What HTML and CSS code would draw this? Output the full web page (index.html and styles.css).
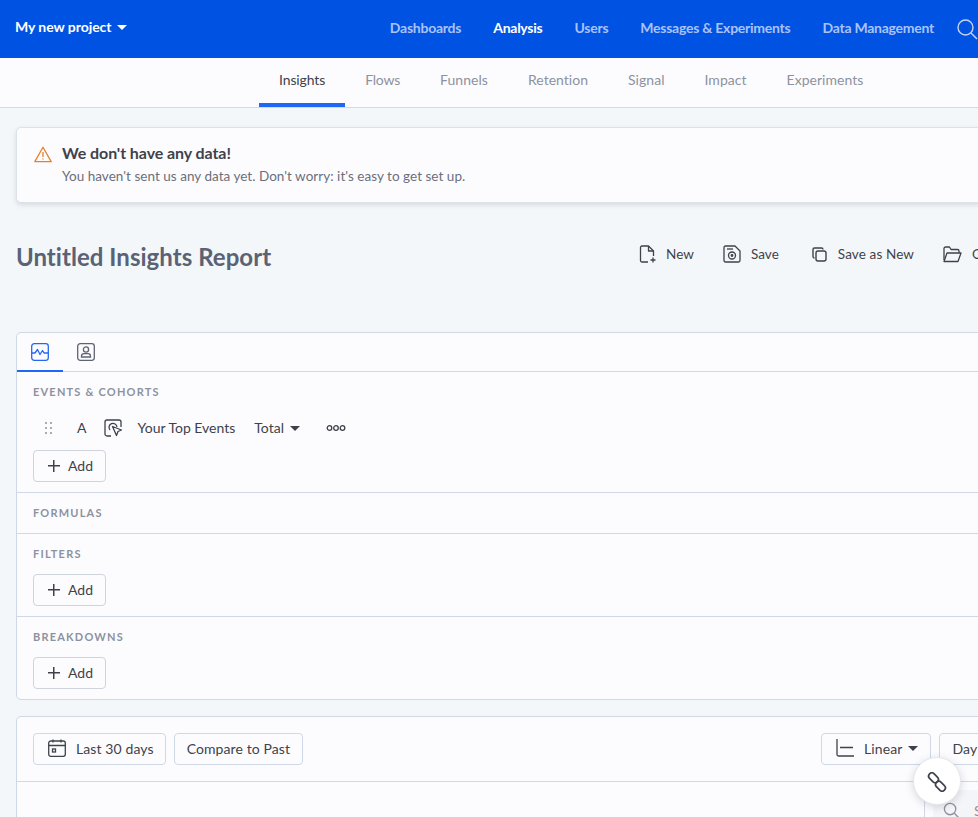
FILE: index.html
```html
<!DOCTYPE html>
<html lang="en">
<head>
    <meta charset="UTF-8">
    <meta name="viewport" content="width=device-width, initial-scale=1.0">
    <title>Untitled Insights Report</title>
    <link rel="stylesheet" href="styles.css">
</head>
<body>
    <div class="page">
        <header class="topbar">
            <div class="project">My new project <span class="caret caret-white"></span></div>
            <nav class="mainNav">
                <a>Dashboards</a>
                <a class="active">Analysis</a>
                <a>Users</a>
                <a>Messages &amp; Experiments</a>
                <a>Data Management</a>
                <svg class="searchIcon" width="22" height="22" viewBox="0 0 22 22" fill="none" stroke="#c3d4f7" stroke-width="1.4"><circle cx="9.5" cy="9.5" r="7.5"/><path d="M15 15l6 6"/></svg>
            </nav>
        </header>

        <nav class="subNav">
            <a class="active">Insights</a>
            <a class="flowsTab">Flows</a>
            <a>Funnels</a>
            <a>Retention</a>
            <a>Signal</a>
            <a>Impact</a>
            <a>Experiments</a>
        </nav>

        <main class="content">
            <div class="alert">
                <svg width="18" height="17" viewBox="0 0 18 17" fill="none" stroke="#e5812b" stroke-width="1.3" stroke-linejoin="round"><path d="M9 1.2L17.2 15.6H.8z"/><path d="M9 6v5M9 12.4v1.2"/></svg>
                <div>
                    <div class="alertTitle">We don't have any data!</div>
                    <div class="alertText">You haven't sent us any data yet. Don't worry: it's easy to get set up.</div>
                </div>
            </div>

            <div class="titleRow">
                <h1>Untitled Insights Report</h1>
                <div class="actions">
                    <span class="action actionNew">
                        <svg width="18" height="18" viewBox="0 0 18 18" fill="none" stroke="#3f424a" stroke-width="1.3" stroke-linejoin="round"><path d="M9 17H3a1.5 1.5 0 0 1-1.5-1.5v-13A1.5 1.5 0 0 1 3 1h6.500l5 5v5"/><path d="M9.500 1v5h5M14 12.500v5M11.500 15h5"/></svg>
                        New
                    </span>
                    <span class="action">
                        <svg width="18" height="18" viewBox="0 0 18 18" fill="none" stroke="#3f424a" stroke-width="1.3" stroke-linejoin="round"><path d="M2.500 1H12l5 5v9.500a1.500 1.500 0 0 1-1.500 1.500h-13A1.500 1.500 0 0 1 1 15.500v-13A1.500 1.500 0 0 1 2.500 1z"/><circle cx="9" cy="10.500" r="3.500"/><circle cx="9" cy="10.500" r=".8"/><path d="M4 4h6"/></svg>
                        Save
                    </span>
                    <span class="action actionCopy">
                        <svg width="15" height="15" viewBox="0 0 15 15" fill="none" stroke="#3f424a" stroke-width="1.4" stroke-linejoin="round"><rect x="4" y="4" width="10" height="10" rx="2"/><path d="M2.500 11A1.500 1.500 0 0 1 1 9.500v-7A1.500 1.500 0 0 1 2.500 1h7A1.500 1.500 0 0 1 11 2.500"/></svg>
                        Save as New
                    </span>
                    <span class="action">
                        <svg width="19" height="17" viewBox="0 0 19 17" fill="none" stroke="#3f424a" stroke-width="1.3" stroke-linejoin="round"><path d="M1 14V2.500A1.500 1.500 0 0 1 2.500 1h4L8 3.500h6.500A1.500 1.500 0 0 1 16 5v2"/><path d="M1 15.500L4 7h14l-3 8.500z"/></svg>
                        Open
                    </span>
                </div>
            </div>

            <section class="panel">
                <div class="panelTabs">
                    <span class="panelTab active">
                        <svg width="18" height="18" viewBox="0 0 18 18" fill="none" stroke="#2468f2" stroke-width="1.3" stroke-linejoin="round"><rect x=".7" y=".7" width="16.600" height="16.600" rx="2.500"/><path d="M1 10h3l2.500-3.500 2.500 5 2.500-4 1.500 2.500h4"/></svg>
                    </span>
                    <span class="panelTab">
                        <svg width="18" height="18" viewBox="0 0 18 18" fill="none" stroke="#5f6473" stroke-width="1.3"><rect x=".7" y=".7" width="16.600" height="16.600" rx="2.500"/><circle cx="9" cy="6.500" r="2.600"/><path d="M4.500 14v-.8a2.500 2.500 0 0 1 2.500-2.500h4a2.500 2.500 0 0 1 2.500 2.500v.8z"/></svg>
                    </span>
                </div>

                <div class="block">
                    <div class="blockLabel">EVENTS &amp; COHORTS</div>
                    <div class="eventRow">
                        <svg class="grip" width="8" height="12" viewBox="0 0 8 12" fill="#a8acb6"><rect width="2" height="2"/><rect x="5" width="2" height="2"/><rect y="5" width="2" height="2"/><rect x="5" y="5" width="2" height="2"/><rect y="10" width="2" height="2"/><rect x="5" y="10" width="2" height="2"/></svg>
                        <span class="eventLetter">A</span>
                        <svg class="eventIcon" width="19" height="18" viewBox="0 0 19 18" fill="none" stroke="#3f424a" stroke-width="1.300" stroke-linejoin="round"><path d="M7 17H3a2 2 0 0 1-2-2V3a2 2 0 0 1 2-2h12a2 2 0 0 1 2 2v5"/><path d="M6 11a4 4 0 1 1 7-3"/><path d="M8.500 7.500l9 3.500-3.500 1.500-1.500 4z"/></svg>
                        <span class="eventName">Your Top Events</span>
                        <span class="eventTotal">Total <span class="caret"></span></span>
                        <svg class="more" width="20" height="8" viewBox="0 0 20 8" fill="none" stroke="#3f424a" stroke-width="1.300"><circle cx="3.500" cy="4" r="2.300"/><circle cx="10" cy="4" r="2.300"/><circle cx="16.500" cy="4" r="2.300"/></svg>
                    </div>
                    <button class="addBtn"><span class="plus"></span>Add</button>
                </div>

                <div class="block blockShort">
                    <div class="blockLabel">FORMULAS</div>
                </div>

                <div class="block">
                    <div class="blockLabel">FILTERS</div>
                    <button class="addBtn"><span class="plus"></span>Add</button>
                </div>

                <div class="block">
                    <div class="blockLabel">BREAKDOWNS</div>
                    <button class="addBtn"><span class="plus"></span>Add</button>
                </div>
            </section>

            <section class="panel chartPanel">
                <div class="chartBar">
                    <div class="chartLeft">
                        <button class="barBtn dateBtn">
                            <svg width="18" height="18" viewBox="0 0 18 18" fill="none" stroke="#3f424a" stroke-width="1.300"><rect x=".7" y="2" width="16.600" height="15.300" rx="2"/><path d="M1 6.500h16M5 .5v3M13 .5v3"/><rect x="4.500" y="10" width="3" height="3"/></svg>
                            Last 30 days
                        </button>
                        <button class="barBtn">Compare to Past</button>
                    </div>
                    <button class="barBtn linearBtn">
                        <svg width="18" height="18" viewBox="0 0 18 18" fill="none" stroke="#3f424a" stroke-width="1.300"><path d="M1 0v15.500A1.500 1.500 0 0 0 2.500 17H18M4 8.500h13"/></svg>
                        Linear <span class="caret"></span>
                    </button>
                    <button class="barBtn">Day <span class="caret"></span></button>
                </div>
                <div class="chartBody">
                    <div class="chartSide">
                        <div class="sideSearch">
                            <svg width="17" height="17" viewBox="0 0 18 18" fill="none" stroke="#8d929e" stroke-width="1.400"><circle cx="7.500" cy="7.500" r="6"/><path d="M12 12l5 5"/></svg>
                            <span>Search</span>
                        </div>
                    </div>
                </div>
            </section>
        </main>

        <button class="linkFab">
            <svg width="20" height="20" viewBox="0 0 20 20" fill="none" stroke="#3f424a" stroke-width="1.700"><rect x="1" y="2.500" width="11" height="6.500" rx="3.250" transform="rotate(45 6.500 5.750)"/><rect x="8" y="11" width="11" height="6.500" rx="3.250" transform="rotate(45 13.500 14.250)"/></svg>
        </button>
    </div>
</body>
</html>
```

FILE: styles.css
```css
body {
    font-family: "Lato", "Open Sans", sans-serif;
    font-size: 14px;
    margin: 0;
    color: #3f424a;
    background-color: #f4f7fa;
    overflow: hidden;
}
.page {
    position: relative;
    width: 978px;
    height: 817px;
    overflow: hidden;
}
.topbar {
    display: flex;
    align-items: center;
    height: 58px;
    padding-left: 15px;
    background-color: #0052e3;
    color: #fff;
    white-space: nowrap;
}
.project {
    width: 376.5px;
    font-weight: 700;
    letter-spacing: -0.05px;
    margin-top: -5px;
}
.mainNav {
    display: flex;
    align-items: center;
    gap: 32px;
    color: #a9c3f6;
    font-weight: 700;
    letter-spacing: -0.25px;
}
.mainNav a {
    margin-top: -4px;
}
.mainNav .active {
    color: #fff;
}
.searchIcon {
    margin-left: -10px;
    flex: none;
}
.caret {
    display: inline-block;
    width: 0;
    height: 0;
    margin-left: 2px;
    vertical-align: 2px;
    border-left: 5px solid transparent;
    border-right: 5px solid transparent;
    border-top: 5px solid #3f424a;
}
.caret-white {
    border-top-color: #fff;
}
.subNav {
    display: flex;
    justify-content: flex-start;
    height: 49px;
    padding-left: 259px;
    background-color: #fcfcff;
    border-bottom: 1px solid #d5d9e2;
    color: #8d929e;
    letter-spacing: 0.03px;
}
.subNav a {
    padding: 13px 20px 0;
}
.subNav .active {
    color: #3f424a;
    letter-spacing: -0.12px;
    border-bottom: 4px solid #1f68f5;
}
.subNav .flowsTab {
    letter-spacing: -0.2px;
}
.content {
    padding: 19px 0 0 16px;
}
.alert {
    display: flex;
    gap: 10px;
    width: 1200px;
    height: 76px;
    box-sizing: border-box;
    padding: 16px 17px;
    background-color: #fcfcff;
    border: 1px solid #dde1e8;
    border-radius: 5px;
    box-shadow: 0 2px 5px rgba(60, 70, 90, 0.16);
}
.alert svg {
    flex: none;
    margin-top: 2px;
}
.alertTitle {
    font-size: 16px;
    font-weight: 700;
    line-height: 18px;
    letter-spacing: -0.08px;
}
.alertText {
    margin-top: 6px;
    font-size: 13.5px;
    letter-spacing: 0.03px;
    color: #6b6f7b;
    line-height: 17px;
}
.titleRow {
    display: grid;
    grid-template-columns: 623px auto;
    width: 1200px;
    height: 129px;
}
h1 {
    margin: 38px 0 0;
    font-size: 24px;
    line-height: 32px;
    font-weight: 700;
    letter-spacing: 0.04px;
    color: #5a6275;
}
.actions {
    display: flex;
    gap: 29px;
    padding-top: 41px;
    align-items: flex-start;
    font-size: 13.5px;
    letter-spacing: 0.05px;
    white-space: nowrap;
}
.action {
    display: flex;
    align-items: center;
    gap: 10px;
    height: 20px;
}
.actionNew {
    gap: 9px;
}
.actionCopy {
    gap: 11px;
    margin-left: 4px;
    letter-spacing: 0.12px;
}
.panel {
    width: 1200px;
    box-sizing: border-box;
    background-color: #fcfcff;
    border: 1px solid #cfd8e6;
    border-radius: 5px;
}
.panelTabs {
    display: flex;
    height: 38px;
    border-bottom: 1px solid #cfd8e6;
}
.panelTab {
    display: flex;
    justify-content: center;
    width: 46px;
    padding-top: 10px;
    box-sizing: border-box;
    height: 39px;
}
.panelTab.active {
    border-bottom: 2px solid #1f68f5;
}
.block {
    padding: 13px 16px 10px;
    border-bottom: 1px solid #cfd8e6;
}
.block:last-child {
    border-bottom: 0;
}
.blockShort {
    height: 41px;
    box-sizing: border-box;
}
.blockLabel {
    font-size: 11px;
    font-weight: 700;
    line-height: 13px;
    letter-spacing: 1.2px;
    color: #8d929e;
}
.block .addBtn {
    margin-top: 14px;
}
.eventRow {
    display: flex;
    align-items: center;
    height: 18px;
    margin-top: 21px;
    white-space: nowrap;
}
.block .eventRow + .addBtn {
    margin-top: 13px;
}
.grip {
    margin-left: 12px;
}
.eventLetter {
    margin: -2px 0 0 24px;
}
.eventIcon {
    margin-left: 18px;
}
.eventName {
    margin: -2px 0 0 14px;
}
.eventTotal {
    margin: -2px 0 0 19px;
}
.eventTotal .caret {
    margin-left: 2px;
}
.more {
    margin-left: 26px;
}
.addBtn {
    display: flex;
    align-items: center;
    gap: 8px;
    width: 73px;
    height: 32px;
    padding: 0 0 2px 14px;
    font: inherit;
    color: #3f424a;
    background-color: #fcfcff;
    border: 1px solid #cfd3dc;
    border-radius: 4px;
}
.plus {
    position: relative;
    width: 12px;
    height: 12px;
    margin-top: 2px;
    background:
        linear-gradient(#3f424a, #3f424a) center / 12px 1.5px no-repeat,
        linear-gradient(#3f424a, #3f424a) center / 1.5px 12px no-repeat;
}
.chartPanel {
    margin-top: 16px;
    height: 200px;
}
.chartBar {
    display: flex;
    align-items: center;
    gap: 8px;
    height: 64px;
    padding: 0 16px;
    border-bottom: 1px solid #cfd8e6;
}
.chartLeft {
    display: flex;
    gap: 8px;
    width: 780px;
}
.barBtn {
    display: flex;
    align-items: center;
    gap: 10px;
    height: 32px;
    padding: 0 12px 2px;
    font: inherit;
    letter-spacing: 0.1px;
    white-space: nowrap;
    color: #3f424a;
    background-color: #fcfcff;
    border: 1px solid #cfd8e6;
    border-radius: 4px;
}
.barBtn .caret {
    margin-left: -4px;
}
.dateBtn {
    padding-left: 14px;
    padding-right: 11px;
}
.linearBtn {
    padding: 0 12px 2px 14px;
}
.chartBody {
    display: flex;
    padding-left: 907px;
}
.chartSide {
    width: 280px;
    height: 120px;
    border-left: 1px solid #cfd8e6;
    padding-left: 8px;
    box-sizing: border-box;
}
.sideSearch {
    display: flex;
    align-items: center;
    gap: 14px;
    height: 40px;
    margin-top: 8px;
    padding-left: 10px;
    color: #8d929e;
    background-color: #f4f5f8;
}
.linkFab {
    position: absolute;
    left: 913px;
    top: 757px;
    display: flex;
    align-items: center;
    justify-content: center;
    width: 48px;
    height: 48px;
    padding: 2px 0 0;
    background-color: #fff;
    border: 1px solid #e6e8ee;
    border-radius: 50%;
    box-shadow: 0 2px 8px rgba(60, 70, 90, 0.2);
}
```
